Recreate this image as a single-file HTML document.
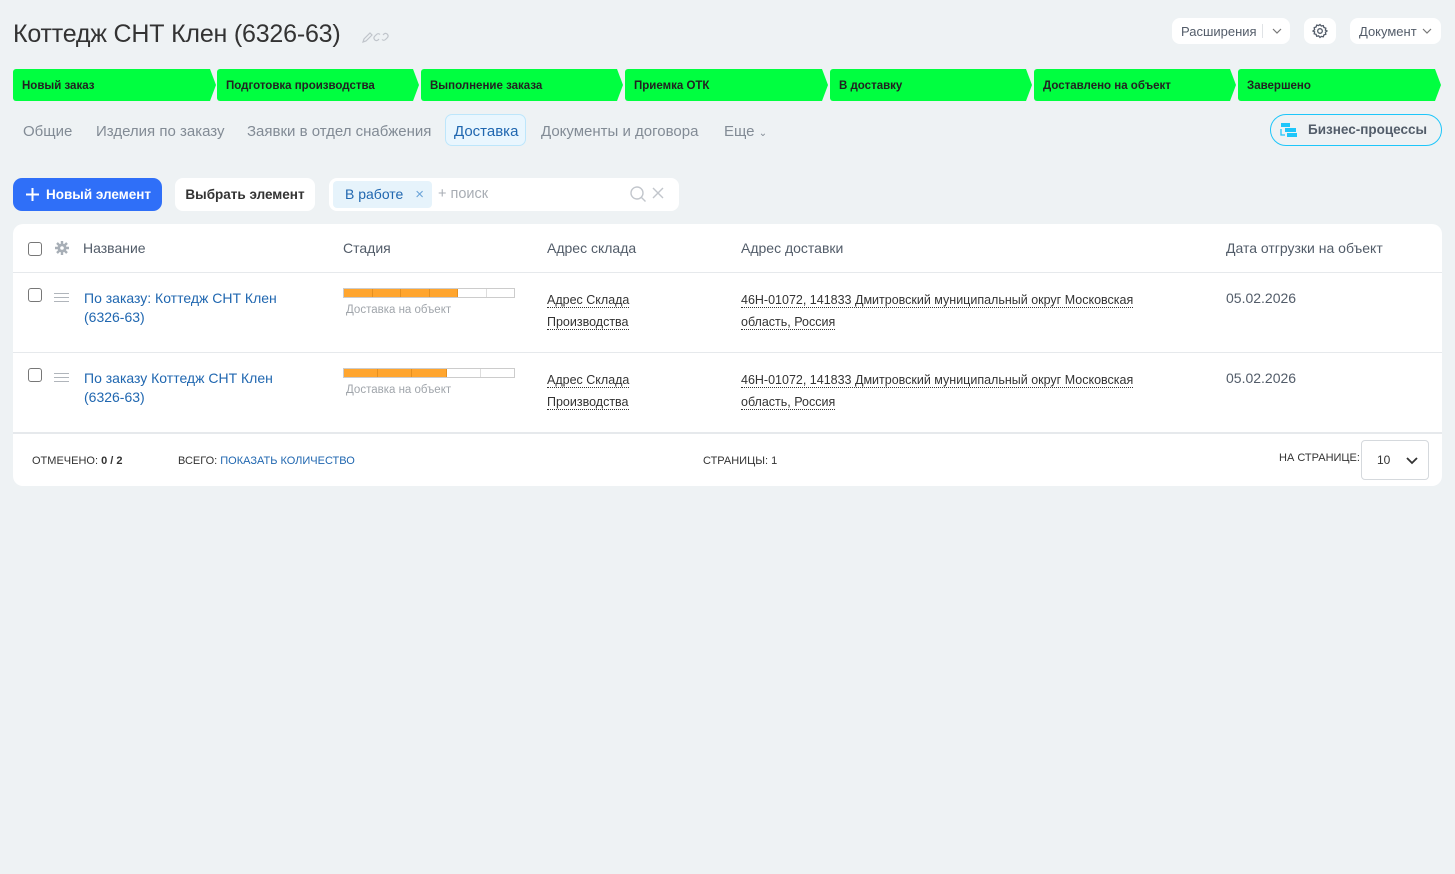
<!DOCTYPE html>
<html><head><meta charset="utf-8"><style>
*{box-sizing:border-box;margin:0;padding:0}
body{width:1455px;height:874px;background:#eef2f4;font-family:"Liberation Sans","Noto Sans CJK SC",sans-serif;color:#333;position:relative;overflow:hidden}
.abs{position:absolute}
h1{position:absolute;left:13px;top:20px;font-size:25px;font-weight:400;color:#333;letter-spacing:-0.2px}
.btn{position:absolute;background:#fff;border-radius:8px;font-size:13px;color:#535c69;display:flex;align-items:center;justify-content:center}
.stage{position:absolute;top:69px;height:32px;background:#00ff40;font-size:11.5px;font-weight:600;color:#222;line-height:34px;padding-left:9px;clip-path:polygon(0 0,calc(100% - 6px) 0,100% 50%,calc(100% - 6px) 100%,0 100%);border-radius:3px 0 0 3px}
.tab{position:absolute;top:123px;font-size:15px;color:#828b95}
.card{position:absolute;left:13px;top:224px;width:1429px;height:262px;background:#fff;border-radius:10px}
.cb{position:absolute;width:14px;height:14px;border:1px solid #777;border-radius:3px;background:#fff}
.th{position:absolute;top:16px;font-size:14px;color:#525c69}
.link{color:#2067b0;font-size:14px;line-height:19px}
.dot{color:#333;font-size:12.5px;line-height:22px;}
.dot span{border-bottom:1px dotted #333}
.bar{position:absolute;width:172px;height:10px;border:1px solid #ccc;display:flex}
.bar i{flex:1;border-right:1px solid #ddd}
.bar i.f{background:#ffa52e;border-right:1px solid #e59020}
.ft{position:absolute;font-size:11px;color:#333;top:231px}
</style></head><body>
<h1>Коттедж СНТ Клен (6326-63)</h1>
<svg class="abs" style="left:361px;top:30px" width="30" height="14" viewBox="0 0 30 14" fill="none" stroke="#c0c5cb" stroke-width="1.2"><path d="M2 12l1-3 6-6 2 2-6 6z"/><path d="M18 9l-1 1a2.5 2.5 0 0 1-3.5-3.5l2-2a2.5 2.5 0 0 1 3.5 0M22 5l1-1a2.5 2.5 0 0 1 3.5 3.5l-2 2a2.5 2.5 0 0 1-3.5 0"/></svg>
<div class="btn" style="left:1172px;top:18px;width:118px;height:26px;justify-content:flex-start;padding-left:9px">Расширения<span style="position:absolute;left:90px;top:6px;height:14px;border-left:1px solid #e0e3e6"></span><svg class="abs" style="left:100px;top:9px" width="10" height="8"><path d="M1 2l4 4 4-4" stroke="#777" fill="none" stroke-width="1.2"/></svg></div>
<div class="btn" style="left:1304px;top:18px;width:32px;height:26px"><svg width="16" height="16" viewBox="0 0 16 16" fill="none" stroke="#535c69" stroke-width="1.3"><circle cx="8" cy="8" r="2.3"/><path d="M8 1.5l1.3 1.5 2-.4.6 1.9 1.9.7-.4 2L15 8l-1.6 1.3.4 2-1.9.6-.6 1.9-2-.4L8 14.5l-1.3-1.6-2 .4-.6-1.9-1.9-.6.4-2L1 8l1.6-1.3-.4-2 1.9-.7.6-1.9 2 .4z"/></svg></div>
<div class="btn" style="left:1350px;top:18px;width:91px;height:26px;justify-content:flex-start;padding-left:9px">Документ<svg class="abs" style="left:72px;top:9px" width="10" height="8"><path d="M1 2l4 4 4-4" stroke="#777" fill="none" stroke-width="1.2"/></svg></div>

<div class="stage" style="left:13px;width:203px">Новый заказ</div>
<div class="stage" style="left:217px;width:202px">Подготовка производства</div>
<div class="stage" style="left:421px;width:202px">Выполнение заказа</div>
<div class="stage" style="left:625px;width:203px">Приемка ОТК</div>
<div class="stage" style="left:830px;width:202px">В доставку</div>
<div class="stage" style="left:1034px;width:202px">Доставлено на объект</div>
<div class="stage" style="left:1238px;width:203px">Завершено</div>

<div class="tab" style="left:23px">Общие</div>
<div class="tab" style="left:96px">Изделия по заказу</div>
<div class="tab" style="left:247px">Заявки в отдел снабжения</div>
<div class="abs" style="left:445px;top:114px;width:81px;height:32px;background:#e9f6fe;border:1px solid #bde6fb;border-radius:7px"></div>
<div class="tab" style="left:454px;color:#2067b0">Доставка</div>
<div class="tab" style="left:541px">Документы и договора</div>
<div class="tab" style="left:724px">Еще <span style="font-size:10px">&#8964;</span></div>
<div class="abs" style="left:1270px;top:114px;width:172px;height:32px;border:1px solid #1ec6fa;border-radius:16px;font-size:13.5px;font-weight:bold;color:#525c69;line-height:30px;padding-left:37px">Бизнес-процессы
<svg class="abs" style="left:9px;top:8px" width="18" height="15"><rect x="1" y="0" width="9" height="4" fill="#1ec6fa"/><rect x="5" y="5" width="11" height="4" fill="#1ec6fa"/><rect x="7" y="10" width="10" height="4" fill="#1ec6fa"/><path d="M1 6v6h4" stroke="#1ec6fa" fill="none" stroke-width="1.3"/></svg></div>

<div class="abs" style="left:13px;top:178px;width:149px;height:33px;background:#2f6ff8;border-radius:9px;color:#fff;font-weight:bold;font-size:13.5px;line-height:33px;padding-left:33px">Новый элемент<svg class="abs" style="left:12px;top:9px" width="15" height="15"><path d="M7.5 1v13M1 7.5h13" stroke="#fff" stroke-width="2"/></svg></div>
<div class="btn" style="left:175px;top:178px;width:140px;height:33px;font-size:13.5px;color:#333;font-weight:600">Выбрать элемент</div>
<div class="abs" style="left:329px;top:178px;width:350px;height:33px;background:#fff;border-radius:8px"></div>
<div class="abs" style="left:333px;top:181px;width:99px;height:27px;background:#e6f3fb;border-radius:4px;font-size:14px;color:#2067b0;line-height:27px;padding-left:12px">В работе <span style="color:#6ba4d8;margin-left:8px;font-size:15px">×</span></div>
<div class="abs" style="left:438px;top:186px;font-size:14.5px;color:#a8adb4">+ поиск</div>
<svg class="abs" style="left:629px;top:185px" width="36" height="18" fill="none" stroke="#c2c6cc" stroke-width="1.4"><circle cx="8" cy="8" r="6"/><path d="M12.5 12.5l4 4M24 3l10 10M34 3L24 13"/></svg>

<div class="card">
<div class="cb" style="left:15px;top:18px"></div>
<svg class="abs" style="left:42px;top:17px" width="14" height="14" viewBox="0 0 14 14"><circle cx="7" cy="7" r="4.5" fill="#a7aeb6"/><path d="M7 0v14M0 7h14M2 2l10 10M12 2L2 12" stroke="#a7aeb6" stroke-width="2.4"/><circle cx="7" cy="7" r="1.8" fill="#fff"/></svg>
<div class="th" style="left:70px">Название</div>
<div class="th" style="left:330px">Стадия</div>
<div class="th" style="left:534px">Адрес склада</div>
<div class="th" style="left:728px">Адрес доставки</div>
<div class="th" style="left:1213px">Дата отгрузки на объект</div>
<div class="abs" style="left:0;top:48px;width:1429px;border-top:1px solid #e6e9ec"></div>
<div class="abs" style="left:0;top:128px;width:1429px;border-top:1px solid #e6e9ec"></div>
<div class="abs" style="left:0;top:208px;width:1429px;border-top:2px solid #e6e9ec"></div>

<div class="cb" style="left:15px;top:64px"></div>
<div class="abs" style="left:41px;top:69px;width:15px;height:9px;border-top:1.5px solid #b0b5bb;border-bottom:1.5px solid #b0b5bb"><div style="margin-top:2.5px;border-top:1.5px solid #b0b5bb"></div></div>
<div class="abs link" style="left:71px;top:65px">По заказу: Коттедж СНТ Клен<br>(6326-63)</div>
<div class="bar" style="left:330px;top:64px"><i class="f"></i><i class="f"></i><i class="f"></i><i class="f"></i><i></i><i style="border:0"></i></div>
<div class="abs" style="left:333px;top:80px;font-size:11.5px;color:#a0a5ab">Доставка на объект</div>
<div class="abs dot" style="left:534px;top:65px"><span>Адрес Склада</span><br><span>Производства</span></div>
<div class="abs dot" style="left:728px;top:65px"><span>46Н-01072, 141833 Дмитровский муниципальный округ Московская</span><br><span>область, Россия</span></div>
<div class="abs" style="left:1213px;top:66px;font-size:14px;color:#525c69">05.02.2026</div>

<div class="cb" style="left:15px;top:144px"></div>
<div class="abs" style="left:41px;top:149px;width:15px;height:9px;border-top:1.5px solid #b0b5bb;border-bottom:1.5px solid #b0b5bb"><div style="margin-top:2.5px;border-top:1.5px solid #b0b5bb"></div></div>
<div class="abs link" style="left:71px;top:145px">По заказу Коттедж СНТ Клен<br>(6326-63)</div>
<div class="bar" style="left:330px;top:144px"><i class="f"></i><i class="f"></i><i class="f"></i><i></i><i style="border:0"></i></div>
<div class="abs" style="left:333px;top:160px;font-size:11.5px;color:#a0a5ab">Доставка на объект</div>
<div class="abs dot" style="left:534px;top:145px"><span>Адрес Склада</span><br><span>Производства</span></div>
<div class="abs dot" style="left:728px;top:145px"><span>46Н-01072, 141833 Дмитровский муниципальный округ Московская</span><br><span>область, Россия</span></div>
<div class="abs" style="left:1213px;top:146px;font-size:14px;color:#525c69">05.02.2026</div>

<div class="ft" style="left:19px">ОТМЕЧЕНО: <b>0 / 2</b></div>
<div class="ft" style="left:165px">ВСЕГО: <span style="color:#2067b0">ПОКАЗАТЬ КОЛИЧЕСТВО</span></div>
<div class="ft" style="left:690px">СТРАНИЦЫ: 1</div>
<div class="ft" style="left:1266px;top:228px">НА СТРАНИЦЕ:</div>
<div class="abs" style="left:1348px;top:216px;width:68px;height:40px;border:1px solid #d5d9dd;border-radius:4px;font-size:12px;line-height:38px;padding-left:15px">10<svg class="abs" style="left:44px;top:15px" width="12" height="9"><path d="M1 2l5 5 5-5" stroke="#333" fill="none" stroke-width="1.8"/></svg></div>
</div>
</body></html>
